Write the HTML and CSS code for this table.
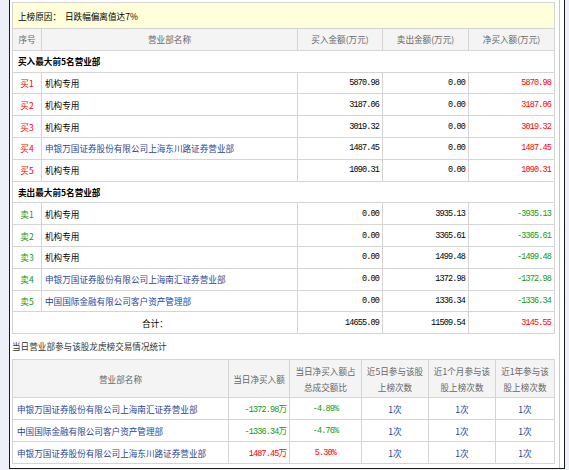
FILE: index.html
```html
<!DOCTYPE html>
<html lang="zh-CN">
<head>
<meta charset="utf-8">
<title>龙虎榜</title>
<link rel="stylesheet" href="styles.css">
</head>
<body>
<div class="frame">
  <div class="wrap">
    <table class="lhb">
      <colgroup>
        <col class="c-no"><col class="c-name"><col class="c-amt"><col class="c-amt2"><col class="c-amt2">
      </colgroup>
      <tr class="reason">
        <td colspan="5"><span class="rlabel">上榜原因：</span><span class="rtext">日跌幅偏离值达7%</span></td>
      </tr>
      <tr class="head">
        <th>序号</th><th>营业部名称</th><th>买入金额(万元)</th><th>卖出金额(万元)</th><th>净买入额(万元)</th>
      </tr>
      <tr class="section"><td colspan="5">买入最大前5名营业部</td></tr>
      <tr><td class="no up">买1</td><td class="name">机构专用</td><td class="num">5870.98</td><td class="num">0.00</td><td class="num up">5870.98</td></tr>
      <tr><td class="no up">买2</td><td class="name">机构专用</td><td class="num">3187.06</td><td class="num">0.00</td><td class="num up">3187.06</td></tr>
      <tr><td class="no up">买3</td><td class="name">机构专用</td><td class="num">3019.32</td><td class="num">0.00</td><td class="num up">3019.32</td></tr>
      <tr><td class="no up">买4</td><td class="name link">申银万国证券股份有限公司上海东川路证券营业部</td><td class="num">1487.45</td><td class="num">0.00</td><td class="num up">1487.45</td></tr>
      <tr><td class="no up">买5</td><td class="name">机构专用</td><td class="num">1090.31</td><td class="num">0.00</td><td class="num up">1090.31</td></tr>
      <tr class="section"><td colspan="5">卖出最大前5名营业部</td></tr>
      <tr><td class="no down">卖1</td><td class="name">机构专用</td><td class="num">0.00</td><td class="num">3935.13</td><td class="num down">-3935.13</td></tr>
      <tr><td class="no down">卖2</td><td class="name">机构专用</td><td class="num">0.00</td><td class="num">3365.61</td><td class="num down">-3365.61</td></tr>
      <tr><td class="no down">卖3</td><td class="name">机构专用</td><td class="num">0.00</td><td class="num">1499.48</td><td class="num down">-1499.48</td></tr>
      <tr><td class="no down">卖4</td><td class="name link">申银万国证券股份有限公司上海南汇证券营业部</td><td class="num">0.00</td><td class="num">1372.98</td><td class="num down">-1372.98</td></tr>
      <tr><td class="no down">卖5</td><td class="name link">中国国际金融有限公司客户资产管理部</td><td class="num">0.00</td><td class="num">1336.34</td><td class="num down">-1336.34</td></tr>
      <tr class="total"><td colspan="2" class="tlabel">合计：</td><td class="num">14655.09</td><td class="num">11509.54</td><td class="num up">3145.55</td></tr>
    </table>

    <div class="caption">当日营业部参与该股龙虎榜交易情况统计</div>

    <table class="stat">
      <colgroup>
        <col class="s1"><col class="s2"><col class="s3"><col class="s4"><col class="s5"><col class="s6">
      </colgroup>
      <tr class="shead">
        <th>营业部名称</th>
        <th>当日净买入额</th>
        <th>当日净买入额占<br>总成交额比</th>
        <th>近5日参与该股<br>上榜次数</th>
        <th>近1个月参与该<br>股上榜次数</th>
        <th>近1年参与该<br>股上榜次数</th>
      </tr>
      <tr><td class="name link">申银万国证券股份有限公司上海南汇证券营业部</td><td class="amt down"><span class="n">-1372.98</span>万</td><td class="pct down">-4.89%</td><td class="cnt">1次</td><td class="cnt">1次</td><td class="cnt">1次</td></tr>
      <tr><td class="name link">中国国际金融有限公司客户资产管理部</td><td class="amt down"><span class="n">-1336.34</span>万</td><td class="pct down">-4.76%</td><td class="cnt">1次</td><td class="cnt">1次</td><td class="cnt">1次</td></tr>
      <tr><td class="name link">申银万国证券股份有限公司上海东川路证券营业部</td><td class="amt up"><span class="n">1487.45</span>万</td><td class="pct up">5.30%</td><td class="cnt">1次</td><td class="cnt">1次</td><td class="cnt">1次</td></tr>
    </table>
  </div>
</div>
</body>
</html>
```

FILE: styles.css
```css
html, body {
  margin: 0;
  padding: 0;
  background: #edf0f9;
}
body {
  font-family: "Noto Sans CJK SC", "Liberation Sans", sans-serif;
  font-size: 8.6px;
  color: #000;
}
.frame {
  margin-left: 9px;
  width: 556px;
  background: #fff;
  border-left: 1px solid #1a1a1a;
  border-right: 1px solid #1a1a1a;
  border-bottom: 1px solid #1a1a1a;
  padding-right: 4px;
  box-sizing: border-box;
}
.wrap {
  padding-left: 2px;
  padding-top: 2px;
  padding-bottom: 4px;
  border-right: 1px solid #c8c8c8;
}
table {
  border-collapse: collapse;
  table-layout: fixed;
  width: 543px;
}
td, th {
  border: 1px solid #d4d4d4;
  padding: 0 3px;
  height: 20.8px;
  white-space: nowrap;
  overflow: hidden;
  font-weight: normal;
  line-height: 12px;
}
.c-no { width: 29px; }
.c-name { width: 256px; }
.c-amt { width: 85px; }
.c-amt2 { width: 86px; }

.reason td {
  background: #ffffd9;
  height: 25px;
  padding-left: 5px;
}
.rlabel { margin-right: 4px; }
.head th {
  background: #f4f4f4;
  color: #666;
  text-align: center;
}
.section td {
  font-weight: bold;
  padding-left: 5px;
}
.no { text-align: center; padding: 0; }
.name { text-align: left; padding-left: 3px; }
.link { color: #1f4595; }
.num {
  text-align: right;
  font-family: "Liberation Mono", monospace;
  font-size: 8.5px;
  letter-spacing: -0.85px;
  padding-right: 3px;
}
.up { color: #f00; }
.down { color: #119911; }
.tlabel { text-align: center; }

.caption {
  height: 25px;
  line-height: 25px;
  color: #333;
}

.s1 { width: 216px; }
.s2 { width: 61px; }
.s3 { width: 72px; }
.s4 { width: 67px; }
.s5 { width: 67px; }
.s6 { width: 59px; }
.stat td { height: 21px; }
.shead th {
  background: #f4f4f4;
  color: #666;
  height: 37px;
  line-height: 16px;
  text-align: center;
  padding: 0 2px;
}
.amt { text-align: right; padding-right: 2px; }
.amt .n, .pct {
  font-family: "Liberation Mono", monospace;
  font-size: 8.5px;
  letter-spacing: -0.85px;
}
.pct { text-align: center; }
.cnt { text-align: center; color: #1f4595; }
.stat .name { padding-left: 4px; }
```
